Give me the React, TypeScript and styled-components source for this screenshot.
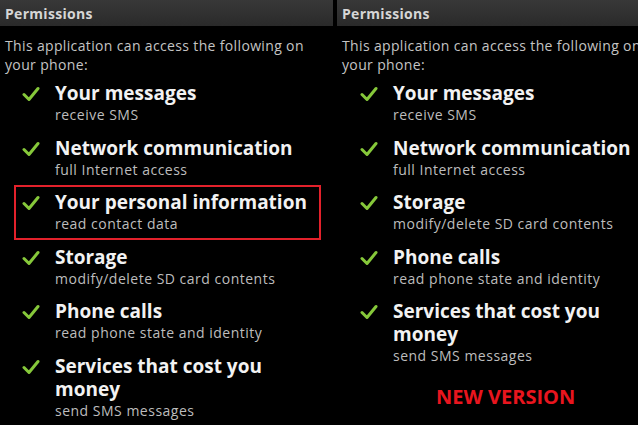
import styled, { createGlobalStyle } from 'styled-components';

const GlobalStyle = createGlobalStyle`
    html, body {
        margin: 0;
        padding: 0;
        background: #000;
    }
    body {
        font-family: "Open Sans", "DejaVu Sans", sans-serif;
    }
`;

type PermissionType = {
    title: string;
    detail: string;
    flagged?: boolean;
};

const Screen = styled.div`
    display: flex;
    align-items: flex-start;
    gap: 4px;
    width: 638px;
    height: 425px;
    overflow: hidden;
    background: #000;
`;

const Panel = styled.div<{ $width?: number }>`
    display: flex;
    flex-direction: column;
    width: ${p => (p.$width ? `${p.$width}px` : 'auto')};
    flex: ${p => (p.$width ? 'none' : '1')};
    min-width: 0;
    overflow: hidden;

    & > * {
        flex: none;
    }
`;

const TitleBar = styled.div`
    height: 26px;
    padding-left: 5px;
    display: flex;
    align-items: center;
    background: linear-gradient(#383838, #2a2a2a);
    color: #d6d6d6;
    font-size: 14px;
    font-weight: 700;
    letter-spacing: 0.3px;
`;

const Intro = styled.p`
    margin: 10px 0 0;
    padding-left: 5px;
    color: #c4c4c4;
    font-size: 14px;
    letter-spacing: 0.35px;
    line-height: 19px;
    white-space: nowrap;
`;

const List = styled.div<{ $indent: number }>`
    display: flex;
    flex-direction: column;
    margin: 2px 12px 0 ${p => p.$indent}px;
`;

const Item = styled.div<{ $flagged?: boolean }>`
    display: flex;
    align-items: flex-start;
    gap: 15px;
    padding: 4px 6px 4.5px;
    border: 2px solid ${p => (p.$flagged ? '#e3212b' : 'transparent')};
`;

const Check = styled.svg`
    flex: none;
    width: 18px;
    height: 16px;
    margin-top: 4px;
`;

const Body = styled.div`
    flex: none;
    display: flex;
    flex-direction: column;
    max-width: 262px;
`;

const Title = styled.div`
    color: #f2f2f2;
    font-size: 19px;
    font-weight: 700;
    line-height: 23px;
`;

const Detail = styled.div`
    color: #bdbdbd;
    font-size: 14px;
    letter-spacing: 0.5px;
    line-height: 19px;
    white-space: nowrap;
`;

const Notice = styled.div`
    margin: 11px 0 0 99px;
    color: #e8151e;
    font-size: 20px;
    font-weight: 700;
`;

const oldList: PermissionType[] = [
    { title: 'Your messages', detail: 'receive SMS' },
    { title: 'Network communication', detail: 'full Internet access' },
    { title: 'Your personal information', detail: 'read contact data', flagged: true },
    { title: 'Storage', detail: 'modify/delete SD card contents' },
    { title: 'Phone calls', detail: 'read phone state and identity' },
    { title: 'Services that cost you money', detail: 'send SMS messages' },
];

const newList = oldList.filter(p => !p.flagged);

const CheckMark = () => (
    <Check viewBox="0 0 18 16">
        <polyline points="2,8.5 7,13.5 16,2.5" fill="none" stroke="#86c83a" strokeWidth="3" strokeLinecap="round" strokeLinejoin="round" />
    </Check>
);

const PermissionScreen = ({ items, indent, width, children }: { items: PermissionType[]; indent: number; width?: number; children?: React.ReactNode }) => (
    <Panel $width={width}>
        <TitleBar>Permissions</TitleBar>
        <Intro>This application can access the following on<br />your phone:</Intro>
        <List $indent={indent}>
            {items.map(p => (
                <Item key={p.title} $flagged={p.flagged}>
                    <CheckMark />
                    <Body>
                        <Title>{p.title}</Title>
                        <Detail>{p.detail}</Detail>
                    </Body>
                </Item>
            ))}
        </List>
        {children}
    </Panel>
);

const App = () => {
    return (
        <>
            <GlobalStyle />
            <Screen>
                <PermissionScreen items={oldList} indent={14} width={333} />
                <PermissionScreen items={newList} indent={15}>
                    <Notice>NEW VERSION</Notice>
                </PermissionScreen>
            </Screen>
        </>
    );
}

export default App;
